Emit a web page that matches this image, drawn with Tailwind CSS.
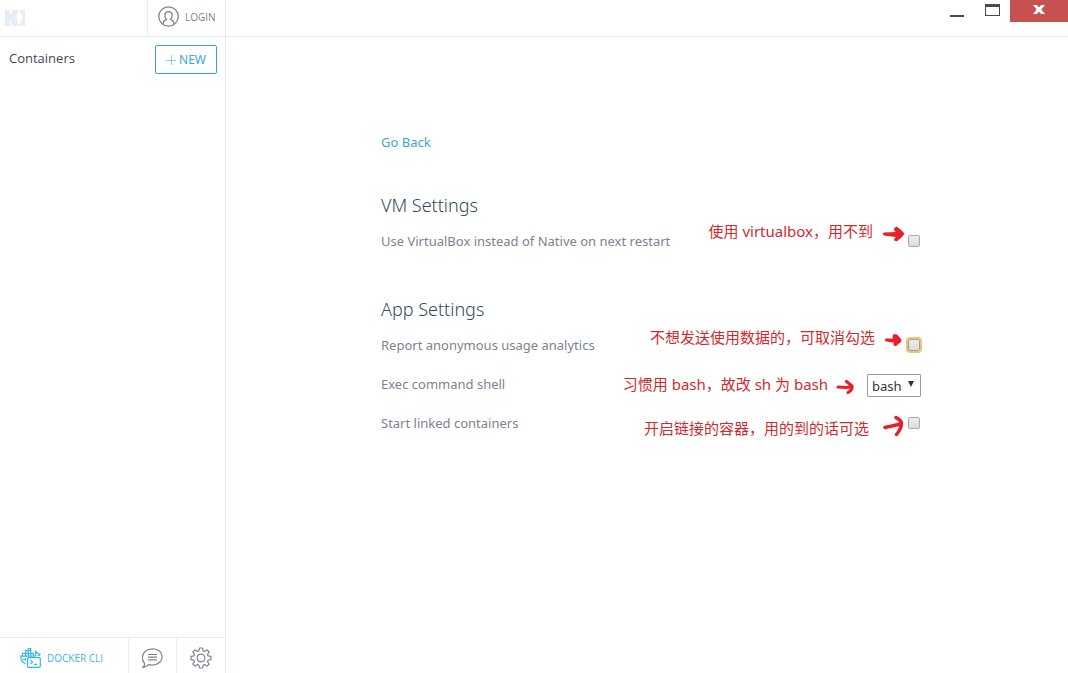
<!DOCTYPE html>
<html lang="en">
<head>
<meta charset="utf-8">
<meta name="viewport" content="width=device-width, initial-scale=1">
<title>Settings</title>
<script src="https://cdn.jsdelivr.net/npm/@tailwindcss/browser@4"></script>
</head>
<body class="flex h-screen flex-col overflow-hidden bg-white font-['Noto_Sans','Noto_Sans_CJK_SC',sans-serif] text-[13px] leading-5 text-[#7e8290]">
<header class="flex h-[37px] shrink-0 border-b border-[#e6ecef]">
  <div class="flex w-[226px] border-r border-[#e6ecef]">
    <div class="flex flex-1 items-center pl-[5px]">
      <svg class="h-4 w-5" viewBox="0 0 20 16" fill="#e6edf4" role="img" aria-label="Logo"><path d="M0 0h5v5L8 0h6l-2.500 5 .5 5 2 6H8l-3-5v5H0zM14 0h6v16h-6l2-4 2-5-2-4z"/></svg>
    </div>
    <button class="flex w-[78px] items-center border-l border-[#e6ecef] pb-[3px] pl-[10px] font-['Open_Sans',sans-serif] text-[10px] font-medium">
      <svg class="mr-[6px] size-[21px] shrink-0" viewBox="0 0 21 21" fill="none" stroke="#7e8290" stroke-width="1.300"><circle cx="10.500" cy="10.500" r="9.700"/><path d="M5 18.300c0-3 1-4 3.400-5C5.600 10.300 6.500 5.700 10.500 5.700s4.900 4.600 2.100 7.600c2.400 1 3.400 2 3.400 5"/></svg>
      LOGIN
    </button>
  </div>
  <div class="flex flex-1 items-start justify-end">
    <button class="flex h-[22px] w-9 items-center justify-center" aria-label="Minimize"><svg class="h-[22px] w-9" viewBox="0 0 36 22"><path d="M12 15h14v2H12z" fill="#4a4a4a"/></svg></button>
    <button class="h-[22px] w-9" aria-label="Maximize"><svg class="h-[22px] w-9" viewBox="0 0 36 22"><path d="M11 4h15v12H11zM12 7v8h13V7z" fill="#4a4a4a" fill-rule="evenodd"/></svg></button>
    <button class="h-[22px] w-[58px] bg-[#c75050]" aria-label="Close"><svg class="h-[22px] w-[58px]" viewBox="0 0 58 22"><path d="M23 5h4l2 2.500L31 5h4l-3.700 4.500L35 14h-4l-2-2.500L27 14h-4l3.700-4.500z" fill="#fff"/></svg></button>
  </div>
</header>
<div class="flex min-h-0 flex-1">
  <aside class="flex w-[226px] shrink-0 flex-col border-r border-[#e6ecef]">
    <div class="flex items-start justify-between pt-2 pr-2 pl-[9px]">
      <h2 class="pt-[3px] font-['Open_Sans',sans-serif] text-[#3d4a57]">Containers</h2>
      <button class="flex h-[29px] w-[62px] items-center justify-center gap-[3px] rounded-[2px] border border-[#35a5c8] text-xs text-[#3aa9d8]">
        <svg class="size-[10px]" viewBox="0 0 10 10" stroke="#8ccbe4"><path d="M5.500 0v10M0 5.500h10"/></svg>NEW
      </button>
    </div>
    <footer class="mt-auto flex h-9 border-t border-[#e6ecef]">
      <button class="flex flex-1 items-center gap-[6px] pt-1 pl-5 font-['Open_Sans',sans-serif] text-[10px] font-medium text-[#3fb6e0]">
        <svg class="h-5 w-[21px]" viewBox="0 0 21 20" fill="none" stroke="#3fb6e0" stroke-width="1.200"><path d="M6 15.500C2.500 15 .8 12 .8 8.200h14c1 0 1.300-.8 1-2.200-.2-1-.6-1.600-.2-2.700 1 .7 1.600 1.500 1.900 2.300 1 0 1.800.1 2.700.7-.5 1-1.400 1.400-2.400 1.600M2.500 8V5.300h11V8M5.500 8V2.700h5.300V8M8.200 8V.6h2.500v2.200M2.500 11.700h3M5.500 10v2.500"/><rect x="7.600" y="9.600" width="12.700" height="9.700" rx="1" fill="#fff"/><path d="m10.500 12.200 2 2-2 2M14 16.400h3"/></svg>
        DOCKER CLI
      </button>
      <button class="flex w-12 items-center justify-center border-l border-[#e6ecef] pt-1" aria-label="Feedback">
        <svg class="h-5 w-[21px]" viewBox="0 0 21 20" fill="none" stroke="#7e8290" stroke-width="1.200"><path d="M1 19.300c1.300-1 1.700-2.200 1.500-4C-.8 11.500-.1 6.500 3.300 3.300 7 .1 14 .1 17.700 3.300c3.200 2.800 3.200 8 0 10.900-3 2.700-7.300 3.400-11 2.500C5 18 3.200 19 1 19.300zM6 6.500h9M6 9.200h9M6 11.900h9"/></svg>
      </button>
      <button class="flex w-[49px] items-center justify-center border-l border-[#e6ecef] pt-1" aria-label="Settings">
        <svg class="size-[22px]" viewBox="0 0 22 22" fill="none" stroke="#7e8290" stroke-width="1.200" stroke-linejoin="round"><circle cx="11" cy="11" r="3.900"/><path d="M9.400 1h3.200l.5 2.900 1.500.6L17 2.800 19.200 5l-1.700 2.400.6 1.500 2.900.5v3.200l-2.900.5-.6 1.500 1.700 2.400-2.200 2.200-2.400-1.700-1.500.6-.5 2.900H9.400l-.5-2.900-1.500-.6L5 19.200 2.800 17l1.700-2.400-.6-1.500L1 12.600V9.400l2.900-.5.600-1.500L2.800 5 5 2.800l2.400 1.700 1.500-.6z"/></svg>
      </button>
    </footer>
  </aside>
  <main class="min-w-0 flex-1 overflow-hidden pt-[95px] pr-[147px] pl-[155px]">
    <a href="#" class="block w-fit text-[#3aa9d0]">Go Back</a>
    <section class="mt-[39px]">
      <h1 class="text-[18px] leading-7 font-light text-[#34495e]">VM Settings</h1>
      <div class="relative mt-3 flex h-5 items-center justify-between">
        <label for="vbox">Use VirtualBox instead of Native on next restart</label>
        <input id="vbox" type="checkbox" class="mr-px size-3 appearance-none rounded-[2px] border border-[#a9a9a9] bg-linear-to-b from-[#ececec] to-[#dcdcdc]">
        <p class="absolute top-[-10px] right-[48px] text-[15px] whitespace-nowrap text-[#cf2b2f]">使用 virtualbox，用不到</p>
        <svg class="absolute top-[-5px] right-4 h-4 w-[23px]" viewBox="0 0 23 16" fill="#e8202a"><path d="M.5 8 2 6.500l6-.3 6-.2-2-1.500.5-3L15 .8l5 4 2.500 3L20 11l-5 4.300-3-.8.5-2.500L14 11l-5-.5L2 9.500z"/></svg>
      </div>
    </section>
    <section class="mt-[44px]">
      <h1 class="text-[18px] leading-7 font-light text-[#34495e]">App Settings</h1>
      <div class="mt-3 flex flex-col gap-[19px]">
        <div class="relative flex h-5 items-center justify-between">
          <label for="usage">Report anonymous usage analytics</label>
          <input id="usage" type="checkbox" class="mr-px size-3 appearance-none rounded-[2px] border border-[#a0a0a0] bg-linear-to-b from-[#ececec] to-[#dcdcdc] ring-2 ring-[#efc56d]">
          <p class="absolute top-[-8px] right-[46px] text-[15px] whitespace-nowrap text-[#cf2b2f]">不想发送使用数据的，可取消勾选</p>
          <svg class="absolute top-[-2px] right-[19px] h-[14px] w-[18px]" viewBox="0 0 18 14" fill="#e8202a"><path d="M.5 7 2 5.500h7L8.500 3 10 1l3 .5 4.500 5L17 9l-5 4-2.500-.5V9.500L2 8.500z"/></svg>
        </div>
        <div class="relative flex h-5 items-center justify-between">
          <label for="shell">Exec command shell</label>
          <div class="relative">
            <select id="shell" class="mt-[3px] block h-[23px] w-[54px] appearance-none rounded-[1px] border border-[#9c9c9c] bg-white pl-1 text-[13px] text-[#333]"><option>bash</option><option>sh</option></select>
            <svg class="pointer-events-none absolute top-[10px] right-[7px] h-[6px] w-[6px]" viewBox="0 0 6 6"><path d="M0 0h6L3 6z" fill="#333"/></svg>
          </div>
          <p class="absolute top-0 right-[93px] text-[15px] whitespace-nowrap text-[#cf2b2f]">习惯用 bash，故改 sh 为 bash</p>
          <svg class="absolute top-[5px] right-[66px] h-4 w-[19px]" viewBox="0 0 19 16" fill="none" stroke="#e8202a" stroke-width="3.200" stroke-linecap="round" stroke-linejoin="round"><path d="M2 8l8 .5L16 8M10.500 2.500 16 7c.5 2.500-1.500 5-4 6.500"/></svg>
        </div>
        <div class="relative flex h-5 items-center justify-between">
          <label for="linked">Start linked containers</label>
          <input id="linked" type="checkbox" class="mr-px size-3 appearance-none rounded-[2px] border border-[#a9a9a9] bg-linear-to-b from-[#ececec] to-[#dcdcdc]">
          <p class="absolute top-[5px] right-[52px] text-[15px] whitespace-nowrap text-[#cf2b2f]">开启链接的容器，用的到的话可选</p>
          <svg class="absolute top-[2px] right-[17px] h-[22px] w-[21px]" viewBox="0 0 21 22" fill="none" stroke="#e8202a" stroke-width="3.500" stroke-linecap="round" stroke-linejoin="round"><path d="M2 12.500 9 11l8.500-2M13 2.500c2 1.500 5 2.500 5.500 5.500 0 4-2.500 8.500-5 11.500"/></svg>
        </div>
      </div>
    </section>
  </main>
</div>
</body>
</html>
